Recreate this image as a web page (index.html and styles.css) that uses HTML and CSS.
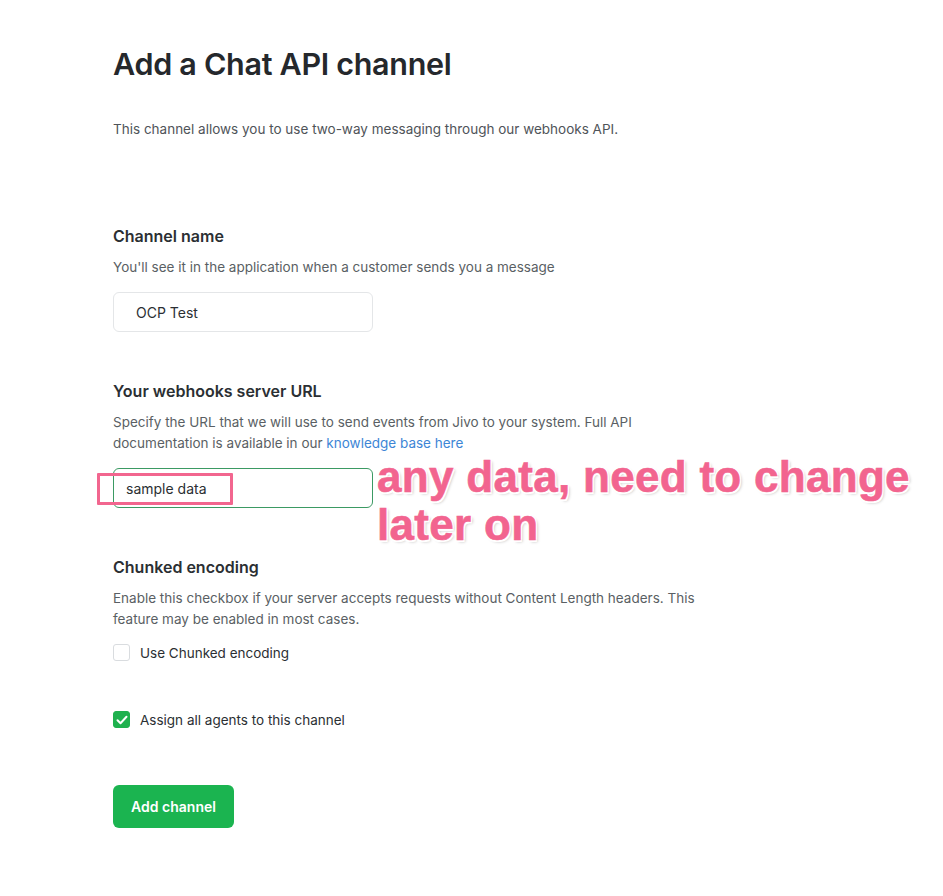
FILE: index.html
```html
<!DOCTYPE html>
<html lang="en">
<head>
  <meta charset="UTF-8" />
  <meta name="viewport" content="width=device-width, initial-scale=1.0" />
  <title>Add a Chat API channel</title>
  <link rel="stylesheet" href="styles.css">
</head>
<body>
  <div class="page">
    <h1>Add a Chat API channel</h1>
    <p class="intro">This channel allows you to use two-way messaging through our webhooks API.</p>

    <div class="field first">
      <h3>Channel name</h3>
      <p class="hint">You'll see it in the application when a customer sends you a message</p>
      <input type="text" class="input name" value="OCP Test" />
    </div>

    <div class="field">
      <h3>Your webhooks server URL</h3>
      <p class="hint">Specify the URL that we will use to send events from Jivo to your system. Full API documentation is available in our <a href="#">knowledge base here</a></p>
      <div class="url-wrap">
        <input type="text" class="input url" value="sample data" />
        <div class="mark"></div>
        <div class="note">
          <div>any data, need to change</div>
          <div class="line2">later on</div>
        </div>
      </div>
    </div>

    <div class="field">
      <h3>Chunked encoding</h3>
      <p class="hint">Enable this checkbox if your server accepts requests without Content Length headers. This feature may be enabled in most cases.</p>
      <label class="check"><span class="box"></span>Use Chunked encoding</label>
    </div>

    <label class="check agents"><span class="box on"><svg width="12" height="10" viewBox="0 0 12 10"><path d="M1.5 5.2l3 3 6-6.4" fill="none" stroke="#fff" stroke-width="2" stroke-linecap="round" stroke-linejoin="round"/></svg></span>Assign all agents to this channel</label>

    <button class="btn">Add channel</button>
  </div>
</body>
</html>
```

FILE: styles.css
```css
body { margin: 0; background: #fff; font-family: Inter, "Noto Sans", sans-serif; color: #2b2f33; }
.page { padding: 44px 113px 60px; }
h1 { font-size: 30.5px; font-weight: 600; margin: 0; line-height: 40px; letter-spacing: -0.3px; color: #25282c; }
.intro { font-size: 13.5px; color: #4f5459; margin: 35px 0 0; line-height: 20px; }
.field { margin-top: 48px; }
.field.first { margin-top: 86px; }
h3 { font-size: 16px; font-weight: 600; margin: 0; line-height: 22px; color: #2b2f33; }
.hint { font-size: 13.5px; color: #5a5f64; margin: 10px 0 0; line-height: 21px; max-width: 600px; }
.hint a { color: #3d86d6; text-decoration: none; }
.input {
  display: block; box-sizing: border-box; width: 260px; height: 40px; margin-top: 14px;
  border: 1px solid #e4e6e8; border-radius: 6px; font-family: inherit; font-size: 14px; color: #2b2f33;
  padding: 0 22px; background: #fff; outline: none;
}
.input.url { border-color: #3b9a63; padding-left: 12px; margin-top: 14px; }
.url-wrap { position: relative; }
.mark { position: absolute; left: -16px; top: 5px; width: 130px; height: 26px; border: 3px solid #f2668f; border-radius: 1px; }
.note {
  position: absolute; left: 264px; top: -13px; font-family: "Liberation Sans", Arial, sans-serif;
  font-size: 44px; font-weight: 700; line-height: 44px; color: #f2648f; white-space: nowrap;
  letter-spacing: 0.3px; -webkit-text-stroke: 0.6px #f2648f;
  text-shadow: 0 0 2px #fff, 1.5px 1.5px 0 #fff, -1.5px -1.5px 0 #fff, 1.5px -1.5px 0 #fff, -1.5px 1.5px 0 #fff, 2px 2px 3px rgba(0,0,0,0.25);
}
.note .line2 { margin-top: 4px; }
.check { display: flex; align-items: center; gap: 10px; font-size: 13.5px; color: #2b2f33; margin-top: 14px; }
.box { width: 15px; height: 15px; border: 1px solid #d9dcdf; border-radius: 3px; display: flex; align-items: center; justify-content: center; }
.box.on { background: #1fb14e; border-color: #1fb14e; }
.check.agents { margin-top: 50px; }
.btn {
  display: block; margin-top: 57px; width: 121px; height: 43px; background: #1bb450; color: #fff;
  border: none; border-radius: 6px; font-family: inherit; font-size: 14px; font-weight: 600; cursor: pointer;
}
```
